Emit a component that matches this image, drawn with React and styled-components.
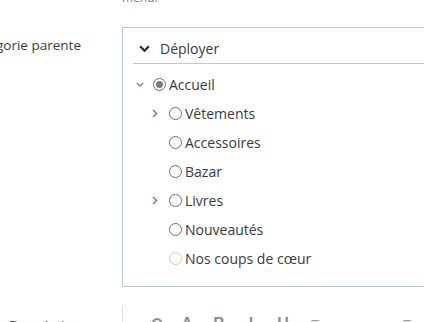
import React from "react";
import styled, { createGlobalStyle } from "styled-components";

const GlobalStyle = createGlobalStyle`
  html, body {
    margin: 0;
    padding: 0;
    background: #fff;
    overflow: hidden;
  }
  body {
    font-family: "Open Sans", "Noto Sans", sans-serif;
    color: #363a41;
  }
`;

const Page = styled.div`
  width: 424px;
  height: 322px;
  overflow: hidden;
  display: flex;
  flex-direction: column;
`;

const FormRow = styled.div`
  display: grid;
  grid-template-columns: 122px 1fr;
  margin-top: ${(p) => p.$gap || 0}px;
`;

const Label = styled.div`
  display: flex;
  justify-content: flex-end;
  padding-right: 41px;
  padding-top: ${(p) => p.$top || 0}px;
  font-size: 13.5px;
  line-height: 20px;
  white-space: nowrap;
  color: #363a41;
`;

const HelpText = styled.div`
  margin-top: -10px;
  font-size: 12px;
  line-height: 16px;
  color: #6c868e;
`;

const TreePanel = styled.div`
  width: 330px;
  border: 1px solid #bbcdd2;
  padding: 0 10px 13px;
  box-sizing: border-box;
`;

const TreeHeader = styled.div`
  display: flex;
  align-items: center;
  gap: 10px;
  padding: 11px 0 4px 6px;
  font-size: 14px;
  line-height: 20px;
  border-bottom: 1px solid #bbcdd2;
`;

const TreeList = styled.ul`
  list-style: none;
  margin: 0;
  padding: 6px 0 0;
`;

const TreeItem = styled.li`
  display: flex;
  align-items: center;
  height: 29px;
  padding-left: ${(p) => p.$level * 16}px;
  font-size: 14px;
  white-space: nowrap;
`;

const Toggle = styled.span`
  display: inline-flex;
  align-items: center;
  width: 20px;
  padding-left: 3px;
  box-sizing: border-box;
  color: #6c868e;
`;

const Radio = styled.span`
  position: relative;
  width: 13px;
  height: 13px;
  box-sizing: border-box;
  border-radius: 50%;
  border: 1px solid ${(p) => (p.$muted ? "#c9c9c9" : "#6d6d6d")};
  background: #fff;
  margin-right: 3px;
  flex-shrink: 0;

  &::after {
    content: "";
    display: ${(p) => (p.$checked ? "block" : "none")};
    position: absolute;
    left: 2px;
    top: 2px;
    width: 7px;
    height: 7px;
    border-radius: 50%;
    background: #7a7a7a;
  }
`;

const EditorBox = styled.div`
  border-left: 1px solid #dfe3e6;
  height: 40px;
  display: flex;
  align-items: flex-start;
  padding: 8px 0 0 16px;
`;

const ToolIcon = styled.span`
  display: inline-flex;
  justify-content: center;
  width: 32px;
  font-family: "Liberation Sans", sans-serif;
  font-weight: bold;
  font-size: 16px;
  line-height: 20px;
  color: #8a9296;
  margin-left: ${(p) => p.$push || 0}px;
`;

const ChevronDown = ({ size = 8, stroke = "currentColor", weight = 1.5 }) => (
  <svg width={size} height={size * 0.7} viewBox="0 0 10 7">
    <path d="M1 1.2 L5 5.2 L9 1.2" fill="none" stroke={stroke} strokeWidth={weight} />
  </svg>
);

const ChevronRight = () => (
  <svg width="6" height="9" viewBox="0 0 6 9">
    <path d="M1 1 L4.6 4.5 L1 8" fill="none" stroke="currentColor" strokeWidth="1.5" />
  </svg>
);

const categories = [
  { name: "Accueil", level: 0, toggle: "down", checked: true },
  { name: "Vêtements", level: 1, toggle: "right" },
  { name: "Accessoires", level: 1 },
  { name: "Bazar", level: 1 },
  { name: "Livres", level: 1, toggle: "right" },
  { name: "Nouveautés", level: 1 },
  { name: "Nos coups de cœur", level: 1, muted: true },
];

const App = () => {
  return (
    <Page>
      <GlobalStyle />
      <FormRow>
        <div />
        <HelpText>menu.</HelpText>
      </FormRow>
      <FormRow $gap={21}>
        <Label $top={8}>Catégorie parente</Label>
        <TreePanel>
          <TreeHeader>
            <ChevronDown size={11} stroke="#25282c" weight={2} />
            <span>Déployer</span>
          </TreeHeader>
          <TreeList>
            {categories.map((cat) => (
              <TreeItem key={cat.name} $level={cat.level}>
                <Toggle>
                  {cat.toggle === "down" && <ChevronDown />}
                  {cat.toggle === "right" && <ChevronRight />}
                </Toggle>
                <Radio $checked={cat.checked} $muted={cat.muted} />
                <span>{cat.name}</span>
              </TreeItem>
            ))}
          </TreeList>
        </TreePanel>
      </FormRow>
      <FormRow $gap={19}>
        <Label $top={9}>Description</Label>
        <EditorBox>
          <ToolIcon>↶</ToolIcon>
          <ToolIcon>A</ToolIcon>
          <ToolIcon>B</ToolIcon>
          <ToolIcon>I</ToolIcon>
          <ToolIcon>U</ToolIcon>
          <ToolIcon>≡</ToolIcon>
          <ToolIcon $push={60}>≡</ToolIcon>
        </EditorBox>
      </FormRow>
    </Page>
  );
};

export default App;
